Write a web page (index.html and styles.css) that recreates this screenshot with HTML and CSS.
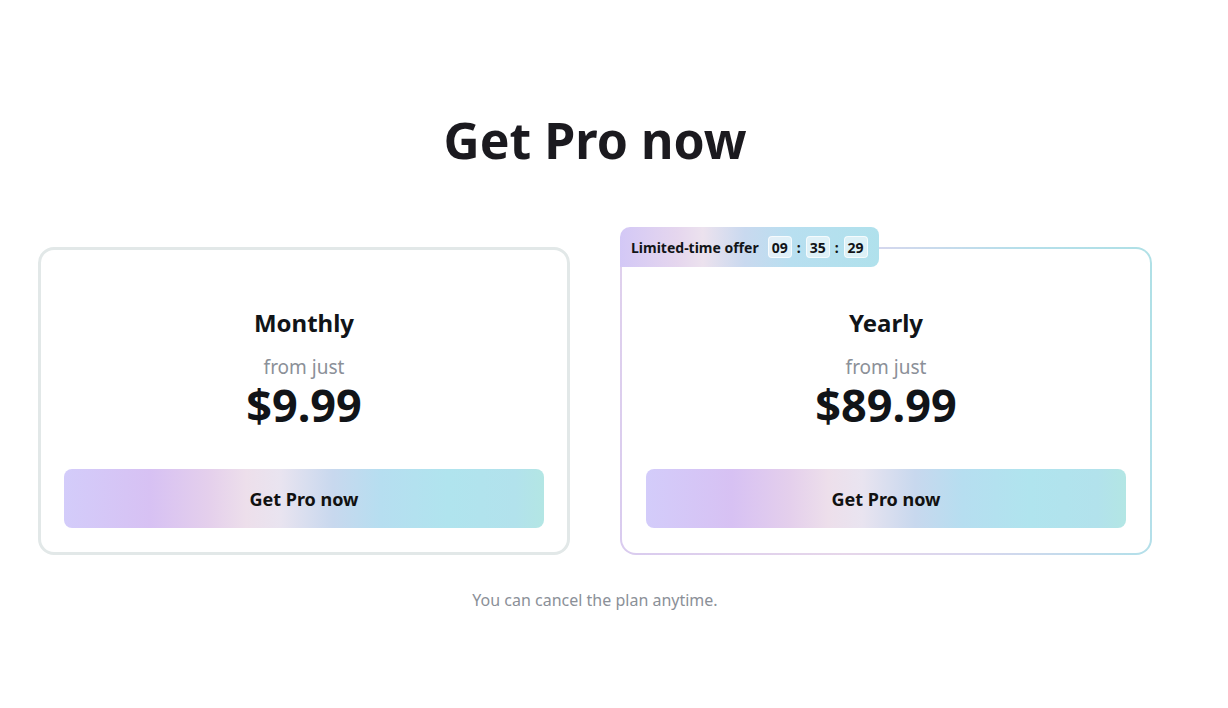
FILE: index.html
```html
<!DOCTYPE html>
<html lang="en">
<head>
    <meta charset="UTF-8">
    <meta name="viewport" content="width=device-width, initial-scale=1.0">
    <title>Get Pro</title>
    <link rel="stylesheet" href="styles.css">
</head>
<body>
<div class="page">
    <h1 class="title">Get Pro now</h1>
    <div class="plans">
        <div class="plan">
            <h2 class="plan-name">Monthly</h2>
            <div class="plan-from">from just</div>
            <div class="plan-price">$9.99</div>
            <button class="buy-btn">Get Pro now</button>
        </div>
        <div class="plan plan-featured">
            <div class="offer">
                <span class="offer-label">Limited-time offer</span>
                <span class="time">09</span>
                <span class="colon">:</span>
                <span class="time">35</span>
                <span class="colon">:</span>
                <span class="time">29</span>
            </div>
            <h2 class="plan-name">Yearly</h2>
            <div class="plan-from">from just</div>
            <div class="plan-price">$89.99</div>
            <button class="buy-btn">Get Pro now</button>
        </div>
    </div>
    <p class="note">You can cancel the plan anytime.</p>
</div>
</body>
</html>
```

FILE: styles.css
```css
body {
    font-family: "Noto Sans", "Open Sans", sans-serif;
    background-color: #fff;
    margin: 0;
    color: #111418;
}

.page {
    width: 1114px;
    margin-left: 38px;
    padding-top: 108px;
    display: flex;
    flex-direction: column;
    align-items: center;
}

.title {
    margin: 0;
    font-size: 50px;
    line-height: 64px;
    font-weight: 700;
    color: #1b1a1f;
}

.plans {
    margin-top: 75px;
    width: 100%;
    display: flex;
    gap: 50px;
}

.plan {
    flex: 1;
    position: relative;
    border: 3px solid #e2e8e8;
    border-radius: 16px;
    padding: 57px 23px 24px;
    display: flex;
    flex-direction: column;
    align-items: center;
    background-color: #fff;
}

.plan-featured {
    border: 2px solid transparent;
    padding: 58px 24px 25px;
    background:
        linear-gradient(#fff, #fff) padding-box,
        linear-gradient(70deg, #d9cbef 0%, #e6d6ea 35%, #d8d6ee 55%, #b5dfea 80%, #afe0e6 100%) border-box;
}

.plan-name {
    margin: 0;
    font-size: 24px;
    line-height: 32px;
    font-weight: 700;
}

.plan-from {
    margin-top: 17px;
    font-size: 19px;
    line-height: 22px;
    color: #8b9098;
}

.plan-price {
    font-size: 45px;
    line-height: 54px;
    font-weight: 700;
}

.buy-btn {
    margin-top: 37px;
    width: 100%;
    height: 59px;
    border: none;
    border-radius: 8px;
    font-family: inherit;
    font-size: 18px;
    font-weight: 700;
    color: #111;
    cursor: pointer;
    background: linear-gradient(90deg, #d3ccfa 0%, #d7c1f3 18%, #e4cfec 30%, #eddfeb 38%, #e9e4f0 45%, #c8d8ee 56%, #b6def0 66%, #b0e4ee 80%, #b2e2ec 94%, #b3e6e4 100%);
}

.offer {
    position: absolute;
    top: -22px;
    left: -2px;
    height: 40px;
    padding: 0 11px 0 11px;
    display: flex;
    align-items: center;
    gap: 5px;
    border-radius: 10px 8px 8px 0;
    font-size: 14px;
    font-weight: 700;
    background: linear-gradient(90deg, #d3c8f6 0%, #e5d6ee 22%, #ece2ee 32%, #c9d9ef 48%, #b8dff0 66%, #b0e1ec 100%);
}

.offer-label {
    margin-right: 4px;
}

.time {
    width: 24px;
    height: 22px;
    box-sizing: border-box;
    display: flex;
    align-items: center;
    justify-content: center;
    border-radius: 4px;
    background-color: rgba(255, 255, 255, 0.55);
    border: 1px solid rgba(255, 255, 255, 0.7);
}

.note {
    margin: 35px 0 0;
    font-size: 16px;
    line-height: 20px;
    color: #8b9098;
}
```
